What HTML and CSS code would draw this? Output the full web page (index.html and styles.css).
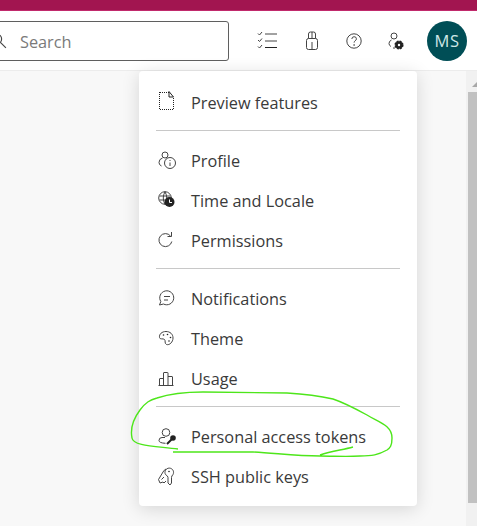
FILE: index.html
```html
<!DOCTYPE html>
<html lang="en">
<head>
    <meta charset="UTF-8">
    <title>User settings</title>
    <link rel="stylesheet" href="styles.css">
</head>
<body>
<div class="stripe"></div>
<header class="head">
    <div class="search">
        <svg class="search-ico" width="16" height="16" viewBox="0 0 16 16"><circle cx="6" cy="6" r="4.600"/><path d="M9.400 9.400l5.500 5.500"/></svg>
        <span>Search</span>
    </div>
    <div class="tools">
        <svg width="24" height="24" viewBox="0 0 24 24"><path d="M3 4.500l1.500 1.500 2.500-3M3 11l1.500 1.500 2.500-3M3 17.500l1.500 1.500 2.500-3M10 5h12M10 12h12"/><path class="dark" d="M10 18.500h12"/></svg>
        <svg width="24" height="24" viewBox="0 0 24 24"><rect x="7.500" y="9.500" width="11" height="11" rx="2"/><path d="M9.500 9.500V5q0-2 2-2h3q2 0 2 2v4.500M13 3v6.500M13 13v7.500"/></svg>
        <svg width="24" height="24" viewBox="0 0 24 24"><circle cx="11" cy="12" r="7.200"/><path d="M8.800 10q.3-2.300 2.300-2.300 2.300 0 2.300 2.100 0 1.300-1.200 2-1.100.6-1.100 1.800"/><circle class="fill" cx="11.100" cy="16" r=".8"/></svg>
        <svg width="24" height="24" viewBox="0 0 24 24"><circle cx="7" cy="7" r="3"/><path d="M4.500 11q-2.500 1-2.500 3.500 0 2 2 3M6 19h2"/><circle class="gear" cx="12" cy="16" r="3.800"/><circle class="hole" cx="12" cy="16" r="1.200"/></svg>
    </div>
    <div class="avatar">MS</div>
</header>
<main class="content">
    <div class="menu">
        <div class="item"><svg width="20" height="24" viewBox="0 0 20 24"><path class="dots" d="M1.500 1v18M2 18.500h14M15.500 18V7M2 1.500h9"/><path class="dark" d="M11 .5v5.500h4.500z"/></svg><span>Preview features</span></div>
        <hr>
        <div class="item"><svg width="20" height="24" viewBox="0 0 20 24"><circle cx="7" cy="6" r="3"/><path d="M4.500 9Q1 10 1 13.500q0 2.500 2.500 3.500"/><circle cx="12" cy="14" r="5.500"/><path d="M12 13.500v3.500M12 11v1"/></svg><span>Profile</span></div>
        <div class="item"><svg width="20" height="24" viewBox="0 0 20 24"><circle cx="7" cy="9" r="6.300"/><path d="M7 2.700q-3.500 6.300 0 12.600M7 2.700q3.500 6.300 0 12.600M1.500 7h11M1.500 11h6"/><circle class="fill" cx="11.500" cy="13" r="5"/><path class="white" d="M11.500 10.500v3h2.500"/></svg><span>Time and Locale</span></div>
        <div class="item"><svg width="20" height="24" viewBox="0 0 20 24"><path d="M12.500 7A6.500 6.500 0 1 0 13.800 12.500"/><path d="M9.500 7.500h4V3"/></svg><span>Permissions</span></div>
        <hr>
        <div class="item"><svg width="20" height="24" viewBox="0 0 20 24"><path d="M1.500 18l1.300-3.500A7 7 0 1 1 5.500 17z"/><path d="M6 9.500h6M6 13h4"/></svg><span>Notifications</span></div>
        <div class="item"><svg width="20" height="24" viewBox="0 0 20 24"><path d="M8 4.500C4 4.500 1 7 1.500 10.500 2 13 5 11 6.500 12.500 8 14 6 16 8.500 17.500c3 1 6.500-2.500 6.500-6.500 0-4-3-6.500-7-6.500z"/><circle class="fill" cx="5.500" cy="8" r=".8"/><circle class="fill" cx="9.500" cy="7.500" r=".8"/><circle class="fill" cx="12.500" cy="10.500" r=".8"/><circle class="fill" cx="11" cy="14" r=".8"/></svg><span>Theme</span></div>
        <div class="item"><svg width="20" height="24" viewBox="0 0 20 24"><path d="M.5 18.500h15M1.500 18.500V12q0-.5.5-.5h3M5.500 18.500V6q0-.5.5-.5h3.500q.5 0 .5.500v12.500M10 9.500h4q.5 0 .5.500v8.500"/></svg><span>Usage</span></div>
        <hr>
        <div class="item"><svg width="20" height="24" viewBox="0 0 20 24"><circle cx="8" cy="7.500" r="3.800"/><path d="M7 12.500H4q-3 0-3 3 0 2.500 6.500 2.800"/><circle class="fill" cx="15" cy="13" r="2.800"/><path class="thick" d="M13.500 14.500l-4.500 4.500"/></svg><span>Personal access tokens</span></div>
        <div class="item"><svg width="20" height="24" viewBox="0 0 20 24"><path d="M8 4Q6 5 5 7L.5 14.500 2 18l3-1 1 1 2-2M3.500 14.500L6 12"/><path d="M7.500 9.500a4.300 4.300 0 1 1 7.500 0Q13.500 11 13.500 12.500V18l-1.500 2-2-2v-5.500Q10 11 7.500 9.500z"/><circle class="fill" cx="11" cy="6.500" r=".8"/></svg><span>SSH public keys</span></div>
    </div>
    <div class="scrollbar"><div class="arrow"></div><div class="thumb"></div></div>
</main>
<!-- freehand highlight drawn over the shot -->
<svg class="scribble" width="477" height="526" viewBox="0 0 477 526"><path d="M178 449C155 446 133 446 132 438 130 428 134 418 140 410 146 402 150 400 157 398 172 393 190 392 203 392L287 393C305 394 320 396 333 399 345 403 356 409 367 415 378 422 392 425 392 438 392 446 390 448 387 450 378 455 372 456 360 456 345 457 335 456 320 456 295 456 275 453 253 452L173 452M320 455C332 451 342 450 353 447"/></svg>
</body>
</html>
```

FILE: styles.css
```css
*{ margin: 0; padding: 0; box-sizing: border-box;}
html,body{ height: 100%; overflow: hidden;}
body{ width: 477px; height: 526px; display: flex; flex-direction: column; background: #fff;
    font-family: "Open Sans", "Noto Sans", sans-serif; color: #333; position: relative;}
svg{ fill: none; stroke: #444; stroke-width: 1; flex: none;}
svg .fill{ fill: #222; stroke: none;}
svg .white{ stroke: #fff;}
svg .dark{ stroke: #222;}
svg .dots{ stroke: #222; stroke-dasharray: 1 1;}
svg .gear{ fill: #222; stroke: #222; stroke-width: 1.500; stroke-dasharray: 2 1;}
svg .hole{ fill: #fff; stroke: none;}
svg .thick{ stroke: #222; stroke-width: 2;}

.stripe{ height: 11px; background: #a21550; border-bottom: 1px solid #c12a6c; flex: none;}
.head{ height: 60px; flex: none; display: flex; align-items: center; border-bottom: 1px solid #ececec;}
.search{ width: 249px; height: 40px; margin-left: -20px; flex: none; border: 1px solid #5f5f5f; border-radius: 3px;
    display: flex; align-items: center; gap: 13px; padding-left: 10px; font-size: 16.300px; color: #7a7a7a;}
.search span{ padding-top: 3px;}
.search-ico{ stroke: #444; stroke-width: 1.200;}
.tools{ display: flex; gap: 20px; margin-left: 26px;}
.avatar{ width: 40px; height: 40px; border-radius: 50%; background: #004e56; color: #cfe6e6; margin-left: 16px;
    display: flex; align-items: center; justify-content: center; font-size: 16.500px; letter-spacing: .5px;}

.content{ flex: 1; display: flex; justify-content: space-between; align-items: flex-start; background: #f8f8f8; padding-left: 139px;}
.menu{ width: 278px; height: 435px; background: #fff; border-radius: 4px; box-shadow: 0 3px 18px rgba(0,0,0,.14); padding: 12px 17px 0;}
.item{ height: 40px; display: flex; align-items: center; gap: 13px; padding-left: 2px; font-size: 16.300px; color: #3a3a3a;}
.menu hr{ border: 0; border-top: 1px solid #c8c8c8; margin: 7px 0 10px;}

.scrollbar{ width: 11px; height: 455px; background: #f1f1f1; padding-top: 11px; flex: none;}
.arrow{ width: 0; height: 0; margin-left: 6px; border-left: 5px solid transparent; border-bottom: 5px solid #a8a8a8;}
.thumb{ height: 411px; margin-top: 5px; margin-left: 2px; background: #c1c1c1;}

.scribble{ position: absolute; left: 0; top: 0; pointer-events: none;}
.scribble path{ fill: none; stroke: #4de61a; stroke-width: 1.400;}
```
